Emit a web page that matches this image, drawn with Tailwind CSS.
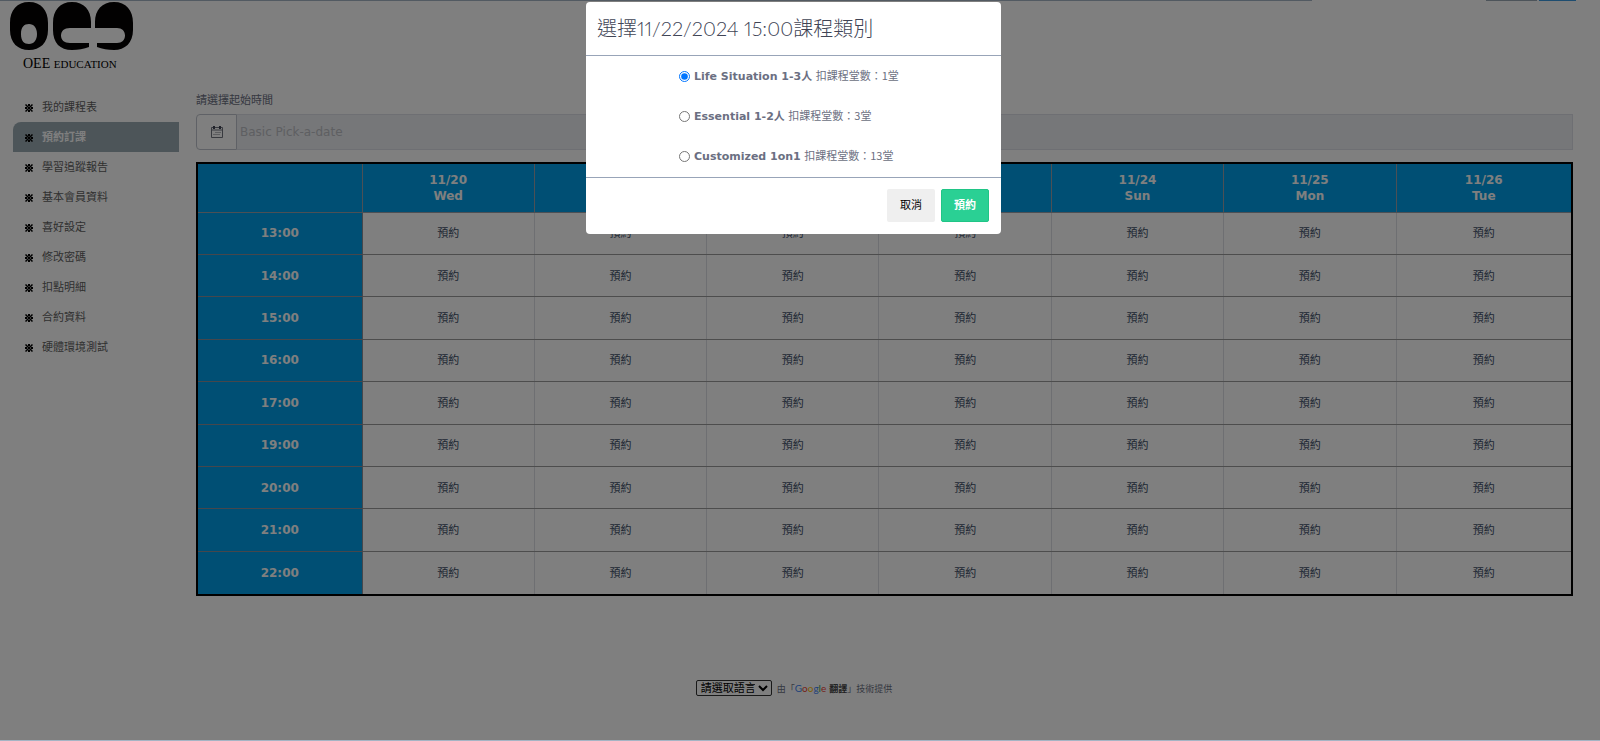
<!DOCTYPE html>
<html lang="zh-Hant">
<head>
<meta charset="utf-8">
<meta name="viewport" content="width=device-width, initial-scale=1">
<title>OEE Education</title>
<script src="https://cdn.jsdelivr.net/npm/@tailwindcss/browser@4"></script>
</head>
<body class="min-h-screen bg-white font-['DejaVu_Sans','Noto_Sans_CJK_TC',sans-serif] text-[11px] leading-4 text-[#6b6f82]">
<div class="flex min-h-screen flex-col">
  <div class="flex h-px pr-6">
    <div class="mr-[174px] flex-1 bg-[#a5b4c4]"></div>
    <div class="mr-0.5 w-[51px] bg-[#9aa8b4]"></div>
    <div class="w-[37px] bg-[#3c9be0]"></div>
  </div>
  <div class="flex flex-1">
    <aside class="w-[196px] shrink-0 pl-[10px] pt-px">
      <a href="#" aria-label="OEE Education" class="block">
        <svg class="h-[68px] w-[124px]" viewBox="0 0 124 68">
          <g fill="#050203">
            <path fill-rule="evenodd" d="M19 0C31 0 38 8 38 21V28C38 41 30 48 19 48S0 41 0 28V21C0 8 7 0 19 0ZM19 22C14 22 11 25 11 32S14 42 19 42 27 38 27 32 24 22 19 22Z"/>
            <path d="M62 0C74 0 81 8 81 20V26H60C54 26 51 29 51 33.500S54 41 60 41H79V45C74 47 68 48 62 48C50 48 43 41 43 28V21C43 8 50 0 62 0Z"/>
            <path d="M104 0C116 0 123 8 123 21V28C123 41 115 48 104 48C98 48 92 47 87 45V41H107C112 41 115 38 115 33.500S112 26 107 26H85V20C85 8 92 0 104 0Z"/>
          </g>
          <text x="13" y="66" font-family="'Liberation Serif', serif" font-size="14" fill="#000">OEE <tspan font-size="11">EDUCATION</tspan></text>
        </svg>
      </a>
      <nav class="mt-[22px] ml-[3px] mr-[17px] text-[#5f5f5f]">
        <a href="#" class="flex h-[30px] items-center gap-[9px] pl-3 pt-0.5"><svg class="size-2 shrink-0" viewBox="0 0 8 8"><use href="#mark"/></svg>我的課程表</a>
        <a href="#" aria-current="page" class="flex h-[30px] items-center gap-[9px] rounded-tl-lg bg-[#9babb3] pl-3 pt-0.5 font-bold text-white"><svg class="size-2 shrink-0" viewBox="0 0 8 8"><use href="#mark"/></svg>預約訂課</a>
        <a href="#" class="flex h-[30px] items-center gap-[9px] pl-3 pt-0.5"><svg class="size-2 shrink-0" viewBox="0 0 8 8"><use href="#mark"/></svg>學習追蹤報告</a>
        <a href="#" class="flex h-[30px] items-center gap-[9px] pl-3 pt-0.5"><svg class="size-2 shrink-0" viewBox="0 0 8 8"><use href="#mark"/></svg>基本會員資料</a>
        <a href="#" class="flex h-[30px] items-center gap-[9px] pl-3 pt-0.5"><svg class="size-2 shrink-0" viewBox="0 0 8 8"><use href="#mark"/></svg>喜好設定</a>
        <a href="#" class="flex h-[30px] items-center gap-[9px] pl-3 pt-0.5"><svg class="size-2 shrink-0" viewBox="0 0 8 8"><use href="#mark"/></svg>修改密碼</a>
        <a href="#" class="flex h-[30px] items-center gap-[9px] pl-3 pt-0.5"><svg class="size-2 shrink-0" viewBox="0 0 8 8"><use href="#mark"/></svg>扣點明細</a>
        <a href="#" class="flex h-[30px] items-center gap-[9px] pl-3 pt-0.5"><svg class="size-2 shrink-0" viewBox="0 0 8 8"><use href="#mark"/></svg>合約資料</a>
        <a href="#" class="flex h-[30px] items-center gap-[9px] pl-3 pt-0.5"><svg class="size-2 shrink-0" viewBox="0 0 8 8"><use href="#mark"/></svg>硬體環境測試</a>
      </nav>
    </aside>
    <main class="min-w-0 flex-1 pr-[27px] pt-[92px]">
      <label for="date" class="block text-[#6b6f82]">請選擇起始時間</label>
      <div class="mt-[5px] flex h-9">
        <span class="flex w-[41px] shrink-0 items-center justify-center rounded-l-sm border border-[#bec3cc]">
          <svg class="size-3" viewBox="0 0 12 12" fill="none" stroke="#70747f"><path d="M.5 1.500H11.500V11.500H.5ZM.5 4H11.500"/><path stroke="#404455" stroke-width="2" d="M3 0V3M9 0V3"/><path stroke-dasharray="1 1" d="M4.500 6.500H10M2.500 8.500H9"/></svg>
        </span>
        <input id="date" type="text" disabled placeholder="Basic Pick-a-date" class="min-w-0 flex-1 border border-l-0 border-[#dcdfe6] bg-[#eceef2] px-[3px] text-[12px] placeholder:text-[#bcbec4]">
      </div>
      <table class="mt-3 h-[434px] w-full table-fixed border-collapse border-2 border-black text-center">
        <colgroup><col class="w-[165px]"><col><col><col><col><col><col><col class="w-[176px]"></colgroup>
        <thead><tr class="h-[49px] bg-[#009fe8] text-[12px] text-white"></tr></thead>
        <tbody></tbody>
      </table>
    </main>
  </div>
  <footer class="flex h-[61px] justify-center pr-3 text-[9px]">
    <div class="flex h-4 items-center gap-[5px]">
      <select aria-label="請選取語言" class="h-4 w-[76px] rounded-xs border border-[#333] bg-white text-[11px] leading-3 text-black"><option>請選取語言</option></select>
      <span>由「<a href="#" class="text-[#444]"><span class="font-['Lato'] text-[10px]"><span class="text-[#4285f4]">G</span><span class="text-[#ea4335]">o</span><span class="text-[#fbbc05]">o</span><span class="text-[#4285f4]">g</span><span class="text-[#34a853]">l</span><span class="text-[#ea4335]">e</span></span> <b>翻譯</b></a>」技術提供</span>
    </div>
  </footer>
</div>

<svg class="hidden"><symbol id="mark" viewBox="0 0 8 8"><path d="M.5 .5L7.500 7.500M7.500 .5L.5 7.500" stroke="#000" stroke-width="1.500"/><path d="M3 0H5V2H3ZM3 6H5V8H3ZM0 3H2V5H0ZM6 3H8V5H6Z"/></symbol></svg>

<div class="fixed inset-0 flex items-start justify-center border-b border-[#a5b4c4] bg-black/50 pr-[13px] pt-0.5">
  <form role="dialog" aria-modal="true" aria-labelledby="title" class="w-[415px] rounded bg-white">
    <header class="border-b border-[#98a4b8] px-[11px] pb-3 pt-3">
      <h2 id="title" class="font-['Lato','Noto_Sans_CJK_TC',sans-serif] text-[20px] font-light leading-[29px] text-[#404455] proportional-nums">選擇11/22/2024 15:00課程類別</h2>
    </header>
    <div class="flex flex-col gap-6 border-b border-[#98a4b8] pb-[13px] pl-[93px] pt-3">
      <label class="flex h-4 items-center gap-1"><input type="radio" name="course" checked class="size-[11px] accent-[#0075ff]"><span><b>Life Situation 1-3人</b> <span class="font-['Noto_Sans_CJK_TC',sans-serif]">扣課程堂數：1堂</span></span></label>
      <label class="flex h-4 items-center gap-1"><input type="radio" name="course" class="size-[11px]"><span><b>Essential 1-2人</b> <span class="font-['Noto_Sans_CJK_TC',sans-serif]">扣課程堂數：3堂</span></span></label>
      <label class="flex h-4 items-center gap-1"><input type="radio" name="course" class="size-[11px]"><span><b>Customized 1on1</b> <span class="font-['Noto_Sans_CJK_TC',sans-serif]">扣課程堂數：13堂</span></span></label>
    </div>
    <footer class="flex justify-end gap-1.5 p-3 pt-[11px]">
      <button type="button" class="h-[33px] w-12 rounded-xs bg-[#efefef] text-black">取消</button>
      <button type="submit" class="h-[33px] w-12 rounded-xs border border-[#20c586] bg-[#2ad094] font-bold text-white">預約</button>
    </footer>
  </form>
</div>
<script>
  const days = [['', ''], ['11/20', 'Wed'], ['11/21', 'Thu'], ['11/22', 'Fri'], ['11/23', 'Sat'], ['11/24', 'Sun'], ['11/25', 'Mon'], ['11/26', 'Tue']];
  const hours = ['13:00', '14:00', '15:00', '16:00', '17:00', '19:00', '20:00', '21:00', '22:00'];
  document.querySelector('thead tr').innerHTML = days.map(([d, w]) =>
    `<th scope="col" class="border border-[#98a0aa]">${d}<br>${w}</th>`).join('');
  document.querySelector('tbody').innerHTML = hours.map(h =>
    `<tr><th scope="row" class="border border-[#8d8f98] bg-[#009fe8] text-[12px] text-white">${h}</th>` +
    '<td class="border border-x-[#dcdfe4] border-y-[#9a9a9a] pt-0.5 text-[#404e67]"><a href="#">預約</a></td>'.repeat(7) + '</tr>').join('');
</script>
</body>
</html>
